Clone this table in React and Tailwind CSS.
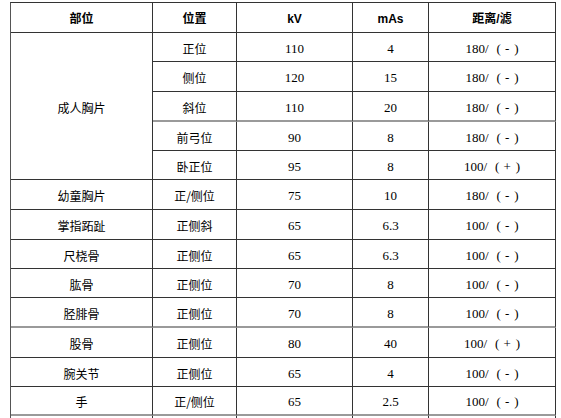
const HEAD = ['部位', '位置', 'kV', 'mAs', '距离/滤']

// 成人胸片 占五行，其余每行一个部位
const CHEST = [
  ['正位', '110', '4', '180', '-'],
  ['侧位', '120', '15', '180', '-'],
  ['斜位', '110', '20', '180', '-', 'gray'],
  ['前弓位', '90', '8', '180', '-'],
  ['卧正位', '95', '8', '100', '+'],
]

const ROWS = [
  ['幼童胸片', '正/侧位', '75', '10', '180', '-'],
  ['掌指跖趾', '正侧斜', '65', '6.3', '100', '-'],
  ['尺桡骨', '正侧位', '65', '6.3', '100', '-'],
  ['肱骨', '正侧位', '70', '8', '100', '-'],
  ['胫腓骨', '正侧位', '70', '8', '100', '-', 'gray'],
  ['股骨', '正侧位', '80', '40', '100', '+'],
  ['腕关节', '正侧位', '65', '4', '100', '-'],
  ['手', '正/侧位', '65', '2.5', '100', '-', 'gray'],
  ['', '', '', '', '', ''],
]

function Cell({ children, gray, bold, className = '' }) {
  return (
    <div
      className={`flex items-center justify-center pt-[3px] border-r border-[#333] ${
        gray ? 'border-b-2 border-b-[#9a9a9a]' : 'border-b border-b-[#333]'
      } ${bold ? 'font-bold' : ''} ${className}`}
    >
      {children}
    </div>
  )
}

function Dist({ d, f }) {
  if (!d) return null
  return (
    <>
      <span>{d}/</span>
      <span className="ml-[8px]">(</span>
      <span className="ml-[4px]">{f}</span>
      <span className="ml-[5px]">)</span>
    </>
  )
}

const CJK = "font-['Noto_Sans_CJK_SC',sans-serif]"

export default function App() {
  return (
    <div className="h-[418px] w-[561px] overflow-hidden bg-white pt-[2px] pl-[10px] text-[12px] text-black font-['Liberation_Serif','Noto_Sans_CJK_SC',serif]">
      <div className="grid w-fit grid-cols-[142px_84px_116px_76px_127px] grid-rows-[30px_29px_30px_30px_29px_29px_30px_30px_29px_29px_30px_30px_29px_29px_30px] border-t border-l border-t-[#333] border-l-[#555]">
        {HEAD.map((h) => (
          <Cell key={h} bold className="font-['Liberation_Sans','Noto_Sans_CJK_SC',sans-serif] text-[12px]">
            {h}
          </Cell>
        ))}

        <Cell className={`row-span-5 ${CJK}`}>成人胸片</Cell>
        {CHEST.map(([pos, kv, mas, d, f, line]) => (
          <div key={pos} className="contents">
            <Cell gray={line === 'gray'} className={CJK}>{pos}</Cell>
            <Cell gray={line === 'gray'} className="text-[13px]">{kv}</Cell>
            <Cell gray={line === 'gray'} className="text-[13px]">{mas}</Cell>
            <Cell gray={line === 'gray'} className="text-[13px]"><Dist d={d} f={f} /></Cell>
          </div>
        ))}

        {ROWS.map(([part, pos, kv, mas, d, f, line], i) => (
          <div key={i} className="contents">
            <Cell gray={line === 'gray'} className={CJK}>{part}</Cell>
            <Cell gray={line === 'gray'} className={CJK}>{pos}</Cell>
            <Cell gray={line === 'gray'} className="text-[13px]">{kv}</Cell>
            <Cell gray={line === 'gray'} className="text-[13px]">{mas}</Cell>
            <Cell gray={line === 'gray'} className="text-[13px]"><Dist d={d} f={f} /></Cell>
          </div>
        ))}
      </div>
    </div>
  )
}
